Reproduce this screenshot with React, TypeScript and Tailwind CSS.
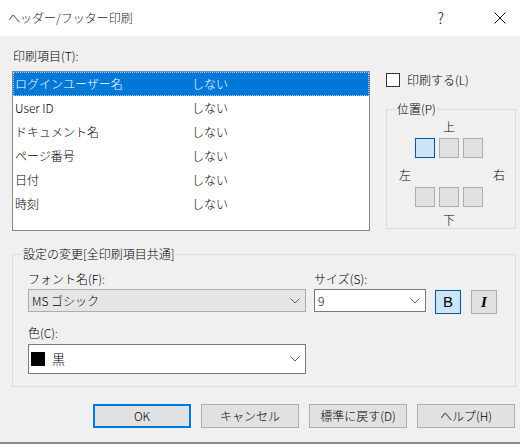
import React from 'react'

const ITEMS = ['ログインユーザー名', 'User ID', 'ドキュメント名', 'ページ番号', '日付', '時刻']

function Chevron() {
  return (
    <svg width="10" height="6" viewBox="0 0 10 6" className="shrink-0">
      <path d="M0.5 0.5 L5 5 L9.5 0.5" fill="none" stroke="#606060" strokeWidth="1" />
    </svg>
  )
}

function PosBox({ active }: { active?: boolean }) {
  return (
    <div
      className={`w-[20px] h-[20px] border ${
        active ? 'bg-[#cce4f7] border-[#005499]' : 'bg-[#e1e1e1] border-[#adadad]'
      }`}
    />
  )
}

export default function App() {
  return (
    <div
      className="w-[520px] h-[444px] bg-[#f0f0f0] flex flex-col text-[12px] leading-[16px] font-light text-black overflow-hidden"
      style={{ fontFamily: '"Noto Sans CJK JP", "Noto Sans", sans-serif' }}
    >
      {/* title bar */}
      <div className="h-[36px] bg-white flex items-center pl-[8px] shrink-0">
        <span className="text-[12px] text-[#1a1a1a]">ヘッダー/フッター印刷</span>
        <span className="ml-auto text-[15px] mr-[50px]">?</span>
        <svg width="12" height="12" viewBox="0 0 12 12" className="mr-[14px]">
          <path d="M0.5 0.5 L11.5 11.5 M11.5 0.5 L0.5 11.5" stroke="#111" strokeWidth="1" />
        </svg>
      </div>

      <div className="flex flex-col pl-[12px] pr-[4px]">
        {/* top section */}
        <div className="flex">
          <div className="flex flex-col w-[358px]">
            <div className="mt-[12px] h-[16px] pl-[1px]">印刷項目(T):</div>
            <div className="mt-[7px] h-[160px] bg-white border border-[#828790] flex flex-col">
              {ITEMS.map((it, i) => (
                <div
                  key={it}
                  className={`h-[24px] flex items-center pl-[1px] border ${
                    i === 0 ? 'bg-[#0078d7] text-white border-dotted border-[#9cc8f0]' : 'border-transparent'
                  }`}
                >
                  <span className="w-[177px]">{it}</span>
                  <span>しない</span>
                </div>
              ))}
            </div>
          </div>

          <div className="flex flex-col ml-[16px] w-[130px]">
            <div className="mt-[36px] flex items-center h-[15px]">
              <div className="w-[14px] h-[14px] bg-white border border-[#333]" />
              <span className="ml-[7px]">印刷する(L)</span>
            </div>
            <fieldset className="mt-[14px] border border-[#dcdcdc] pl-[9px] h-[128px] min-w-0">
              <legend className="px-[1px] h-[16px]">位置(P)</legend>
              <div className="mt-[2px] ml-[19px] w-[68px] text-center h-[16px]">上</div>
              <div className="mt-[3px] ml-[19px] flex gap-[4px]">
                <PosBox active />
                <PosBox />
                <PosBox />
              </div>
              <div className="mt-[9px] ml-[3px] w-[106px] flex justify-between h-[16px]">
                <span>左</span>
                <span>右</span>
              </div>
              <div className="mt-[4px] ml-[19px] flex gap-[4px]">
                <PosBox />
                <PosBox />
                <PosBox />
              </div>
              <div className="mt-[5px] ml-[19px] w-[68px] text-center h-[16px]">下</div>
            </fieldset>
          </div>
        </div>

        {/* settings group */}
        <fieldset className="mt-[15px] border border-[#dcdcdc] pl-[8px] pb-[12px] min-w-0">
          <legend className="px-[2px] h-[16px]">設定の変更[全印刷項目共通]</legend>
          <div className="flex ml-[7px] mt-[9px]">
            <div className="flex flex-col w-[278px]">
              <div className="h-[16px]">フォント名(F):</div>
              <div className="mt-[2px] h-[23px] bg-[#e5e5e5] border border-[#adadad] flex items-center pl-[3px] pr-[5px]">
                <span className="flex-1">MS ゴシック</span>
                <Chevron />
              </div>
              <div className="mt-[13px] h-[16px]">色(C):</div>
              <div className="mt-[3px] h-[30px] bg-white border border-[#7a7a7a] flex items-center pl-[2px] pr-[5px]">
                <div className="w-[14px] h-[14px] bg-black" />
                <span className="ml-[7px] flex-1 text-[13px]">黒</span>
                <Chevron />
              </div>
            </div>
            <div className="flex flex-col ml-[8px] w-[112px]">
              <div className="h-[16px]">サイズ(S):</div>
              <div className="mt-[2px] h-[23px] bg-white border border-[#7a7a7a] flex items-center pl-[3px] pr-[5px]">
                <span className="flex-1">9</span>
                <Chevron />
              </div>
            </div>
            <div className="flex ml-[9px] mt-[19px] gap-[10px] h-[24px]">
              <div
                className="w-[26px] h-[24px] bg-[#cce4f7] border border-[#005499] flex items-center justify-center text-[15px] font-normal"
                style={{ fontFamily: '"Liberation Sans", sans-serif' }}
              >
                B
              </div>
              <div
                className="w-[26px] h-[24px] bg-[#e1e1e1] border border-[#adadad] flex items-center justify-center text-[15px] font-bold italic"
                style={{ fontFamily: '"Liberation Serif", serif' }}
              >
                I
              </div>
            </div>
          </div>
        </fieldset>

        {/* buttons */}
        <div className="flex justify-end gap-[10px] mt-[17px] pr-[1px]">
          <div className="w-[98px] h-[24px] bg-[#e1e1e1] border-2 border-[#0078d7] flex items-center justify-center">OK</div>
          <div className="w-[98px] h-[24px] bg-[#e1e1e1] border border-[#adadad] flex items-center justify-center">キャンセル</div>
          <div className="w-[98px] h-[24px] bg-[#e1e1e1] border border-[#adadad] flex items-center justify-center">標準に戻す(D)</div>
          <div className="w-[98px] h-[24px] bg-[#e1e1e1] border border-[#adadad] flex items-center justify-center">ヘルプ(H)</div>
        </div>
      </div>
      <div className="mt-auto h-[2px] bg-[#8a8a8a] shrink-0" />
    </div>
  )
}
